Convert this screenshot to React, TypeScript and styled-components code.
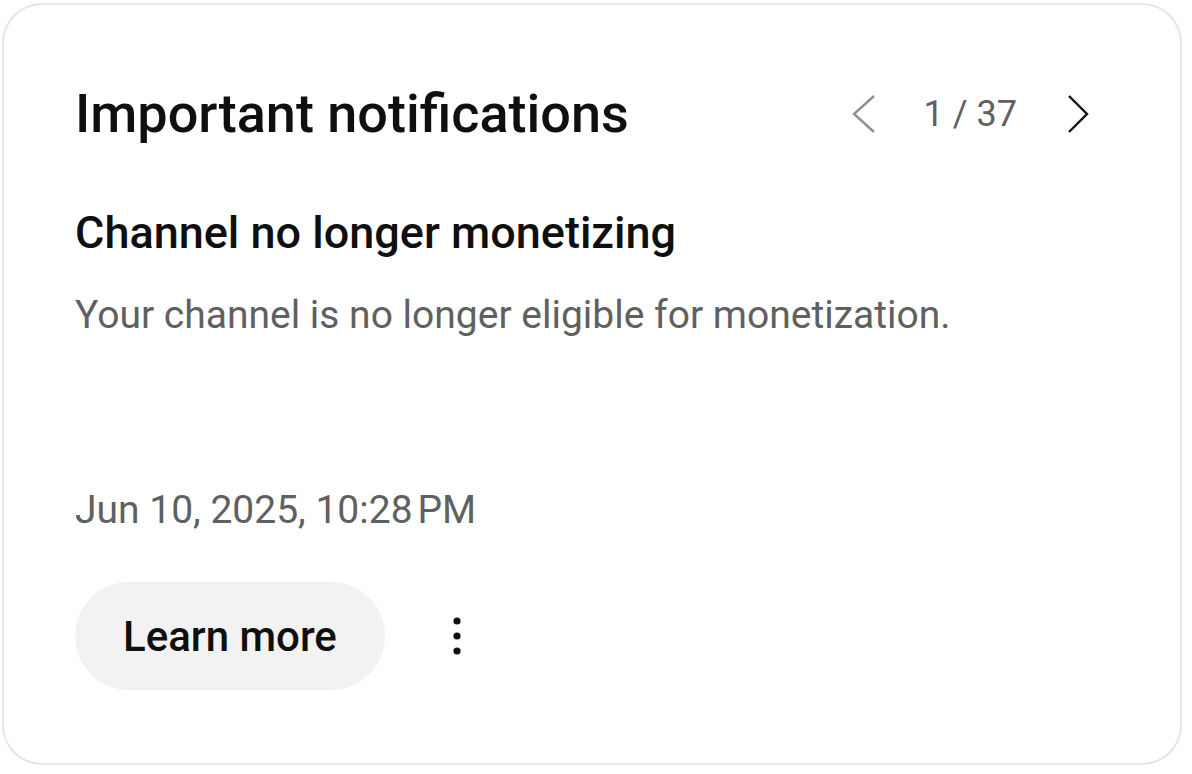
import React from "react";
import styled, { createGlobalStyle } from "styled-components";

const Global = createGlobalStyle`
  html, body { margin: 0; padding: 0; background: #ffffff; }
  body { font-family: Roboto, "Noto Sans", Arial, sans-serif; -webkit-font-smoothing: antialiased; }
`;

const Card = styled.section`
  box-sizing: border-box;
  width: 1180px;
  height: 762px;
  margin: 3px 0 0 2px;
  border: 2px solid #e5e5e5;
  border-radius: 40px;
  padding: 79px 71px 0 71px;
  display: flex;
  flex-direction: column;
  align-items: flex-start;
  color: #0f0f0f;
`;

const Header = styled.header`
  align-self: stretch;
  display: flex;
  align-items: center;
  justify-content: space-between;
  height: 60px;
`;

const Title = styled.h1`
  margin: 0;
  font-size: 54px;
  font-weight: 500;
  line-height: 60px;
`;

const Pager = styled.div`
  display: flex;
  align-items: center;
  margin-right: 8px;
`;

const PagerButton = styled.button<{ $muted?: boolean }>`
  border: none;
  background: none;
  padding: 0;
  width: 48px;
  height: 48px;
  display: flex;
  align-items: center;
  justify-content: center;
  color: ${(p) => (p.$muted ? "#909090" : "#0f0f0f")};
  cursor: pointer;
`;

const PageCount = styled.span`
  font-size: 36px;
  line-height: 48px;
  color: #606060;
  padding: 0 36px 0 34px;
`;

const Subtitle = styled.h2`
  margin: 63px 0 0 0;
  font-size: 45px;
  font-weight: 500;
  line-height: 52px;
`;

const Body = styled.p`
  margin: 32px 0 0 0;
  font-size: 39px;
  line-height: 48px;
  color: #606060;
`;

const DateLine = styled.p`
  margin: 147px 0 0 0;
  font-size: 39px;
  line-height: 48px;
  color: #606060;
`;

const Actions = styled.div`
  display: flex;
  align-items: center;
  margin-top: 48px;
  gap: 48px;
`;

const PrimaryButton = styled.button`
  border: none;
  background: #f2f2f2;
  height: 108px;
  padding: 0 48px;
  border-radius: 54px;
  font-family: inherit;
  font-size: 42px;
  font-weight: 500;
  color: #0f0f0f;
  cursor: pointer;
`;

const IconButton = styled.button`
  border: none;
  background: none;
  padding: 0;
  width: 48px;
  height: 48px;
  display: flex;
  align-items: center;
  justify-content: center;
  color: #0f0f0f;
`;

const Chevron = ({ dir }: { dir: "left" | "right" }) => (
  <svg width="48" height="48" viewBox="0 0 24 24" fill="none">
    <path
      d={dir === "left" ? "M16 3 L6 12 L16 21" : "M8 3 L17 12 L8 21"}
      stroke="currentColor"
      strokeWidth="1.2"
    />
  </svg>
);

const Kebab = () => (
  <svg width="48" height="48" viewBox="0 0 24 24" fill="currentColor">
    <circle cx="12" cy="4.5" r="1.8" />
    <circle cx="12" cy="12" r="1.8" />
    <circle cx="12" cy="19.5" r="1.8" />
  </svg>
);

export default function App() {
  return (
    <>
      <Global />
      <Card>
        <Header>
          <Title>Important notifications</Title>
          <Pager>
            <PagerButton $muted aria-label="Previous">
              <Chevron dir="left" />
            </PagerButton>
            <PageCount>1 / 37</PageCount>
            <PagerButton aria-label="Next">
              <Chevron dir="right" />
            </PagerButton>
          </Pager>
        </Header>
        <Subtitle>Channel no longer monetizing</Subtitle>
        <Body>Your channel is no longer eligible for monetization.</Body>
        <DateLine>Jun 10, 2025, 10:28{"\u202F"}PM</DateLine>
        <Actions>
          <PrimaryButton>Learn more</PrimaryButton>
          <IconButton aria-label="More actions">
            <Kebab />
          </IconButton>
        </Actions>
      </Card>
    </>
  );
}
